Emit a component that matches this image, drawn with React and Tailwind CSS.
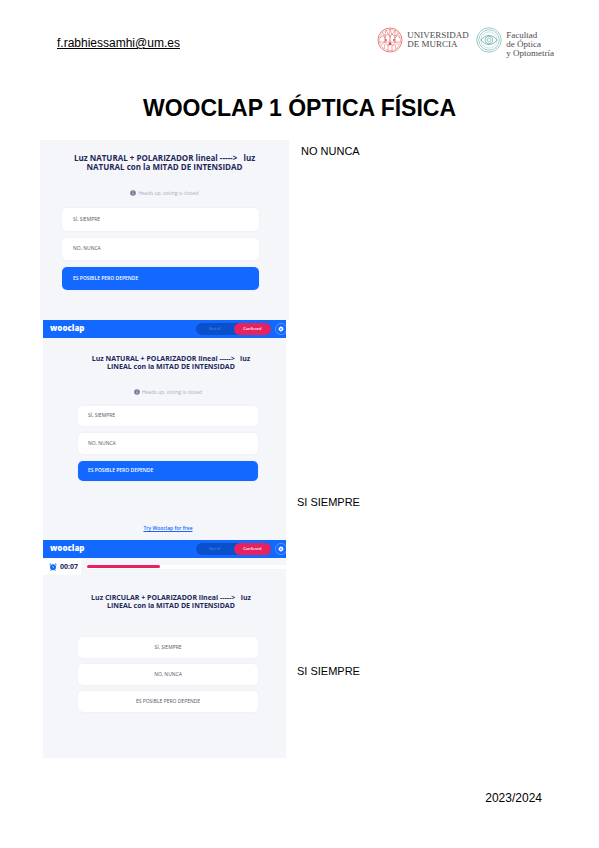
import React from 'react';

function UniversityCrest() {
  return (
    <svg viewBox="0 0 26 26" className="h-[26px] w-[26px] shrink-0" fill="none" stroke="#e0746e" aria-hidden="true">
      <circle cx="13" cy="13" r="12" strokeWidth=".9" />
      <circle cx="13" cy="13" r="10.6" strokeWidth=".4" />
      <path d="M3 11c2-3 4-3 5 0v4M8 11c1-4 4-5 5-1v6M13 10c1-4 4-3 5 1v4M18 11c1-3 3-3 5 0" strokeWidth=".9" />
      <path d="M5 5l3 4 1-6 3 5 1-6 2 6 3-5 0 6 4-3M2 15h22M4 18l4-3 3 4 2-4 3 4 2-4 4 3M7 22l1-5M11 24v-6M15 24v-6M19 22l-1-5" strokeWidth=".6" />
      <circle cx="13" cy="17" r="1.3" fill="#d9434f" stroke="none" />
      <circle cx="9" cy="13" r=".9" fill="#d9434f" stroke="none" />
      <circle cx="17" cy="13" r=".9" fill="#d9434f" stroke="none" />
    </svg>
  );
}

function OpticsLogo() {
  return (
    <svg viewBox="0 0 26 26" className="h-[26px] w-[26px] shrink-0" fill="none" stroke="#7dbbb7" aria-hidden="true">
      <circle cx="13" cy="13" r="12.2" strokeWidth=".8" />
      <circle cx="13" cy="13" r="10.2" strokeWidth=".7" />
      <circle cx="13" cy="13" r="8.2" strokeWidth=".4" />
      <path d="M5 13c4-6 12-6 16 0c-4 6-12 6-16 0z" strokeWidth="1" />
      <circle cx="13" cy="13" r="3.8" strokeWidth=".9" />
      <circle cx="13" cy="13" r="1.8" strokeWidth=".8" />
    </svg>
  );
}

function Gear() {
  return (
    <svg viewBox="0 0 14 14" className="h-3.5 w-3.5" aria-hidden="true">
      <circle cx="7" cy="7" r="5.6" fill="none" stroke="#6da3ff" strokeWidth=".7" />
      <circle cx="7" cy="7" r="1.5" fill="none" stroke="#fff" strokeWidth="1.3" />
      <circle cx="7" cy="7" r="2.3" fill="none" stroke="#fff" strokeWidth=".7" strokeDasharray="1 .8" />
    </svg>
  );
}

function AlarmClock() {
  return (
    <svg viewBox="0 0 8 8" className="h-2 w-2 shrink-0" aria-hidden="true">
      <circle cx="4" cy="4.3" r="3" fill="#1268ff" />
      <path d="M.5 1.8L2 .6M7.5 1.8L6 .6M1.6 7.6l.8-1M6.4 7.6l-.8-1" stroke="#1268ff" strokeWidth="1" />
      <path d="M4 2.8v1.6l1 .6" stroke="#fff" strokeWidth=".6" fill="none" />
    </svg>
  );
}

function TopBar() {
  return (
    <div className="flex h-[18px] items-center bg-[#1268ff] pl-[7px]">
      <span className="grow pb-0.5 text-[8px] leading-3 font-extrabold text-white">wooclap</span>
      <div className="flex h-3 w-[75px] rounded-full bg-[#0b50cb] text-[4px] leading-3">
        <button type="button" className="w-1/2 text-[#5f93ed]">Got it!</button>
        <button type="button" className="w-1/2 rounded-full bg-[#e62260] font-semibold text-white">Confused</button>
      </div>
      <button type="button" aria-label="Settings" className="ml-[3px] w-3 shrink-0 overflow-hidden">
        <Gear />
      </button>
    </div>
  );
}

function Question({ kind, second, look }) {
  return (
    <h2 className={`text-center font-bold whitespace-nowrap text-[#23285a] ${look}`}>
      Luz {kind} + POLARIZADOR lineal -----&gt; &nbsp; luz
      <br />
      {second} con la MITAD DE INTENSIDAD
    </h2>
  );
}

function Closed() {
  return (
    <p className="flex items-center justify-center gap-0.5 text-[5px] leading-[6px] text-[#a9acbf]">
      <svg viewBox="0 0 6 6" className="h-1.5 w-1.5" aria-hidden="true">
        <circle cx="3" cy="3" r="2.8" fill="#737895" />
        <path d="M3 1.2v.7M3 2.5v2.1" stroke="#fff" strokeWidth=".7" />
      </svg>
      Heads up, voting is closed
    </p>
  );
}

function Options({ size, align, chosen }) {
  const labels = ['SÍ, SIEMPRE', 'NO, NUNCA', 'ES POSIBLE PERO DEPENDE'];
  return (
    <div className={`flex flex-col ${size}`}>
      {labels.map((label, i) => (
        <button
          type="button"
          key={label}
          className={`grow rounded-[5px] text-[5px] shadow-[0_0_2px_#e4e6ee] ${align} ${
            chosen === i ? 'bg-[#1268ff] font-semibold text-white' : 'bg-white text-[#55585f]'
          }`}
        >
          {label}
        </button>
      ))}
    </div>
  );
}

function Answer({ children, place }) {
  return <p className={`text-[11px] leading-4 ${place}`}>{children}</p>;
}

export default function App() {
  return (
    <div className="bg-white font-['Liberation_Sans',Arial,sans-serif] text-black">
      <header className="flex items-start justify-between pt-[27px] pr-[45px] pl-[57px]">
        <a href="mailto:f.rabhiessamhi@um.es" className="mt-2 text-[12px] leading-4 underline">
          f.rabhiessamhi@um.es
        </a>
        <div className="flex items-start font-['Liberation_Serif',serif] text-[9px] leading-[9px] text-[#4b4b50]">
          <UniversityCrest />
          <p className="mt-1 ml-1 w-[69px]">
            UNIVERSIDAD
            <br />
            DE MURCIA
          </p>
          <OpticsLogo />
          <p className="mt-1 ml-1">
            Facultad
            <br />
            de Óptica
            <br />
            y Optometría
          </p>
        </div>
      </header>

      <h1 className="mt-[34px] text-center text-[23px] leading-8 font-bold">WOOCLAP 1 ÓPTICA FÍSICA</h1>

      <main className="mt-4 pl-10">
        <section className="flex">
          <div className="h-[180px] w-[249px] bg-[#f5f6fa] px-[22px] pt-[13px] font-['Open_Sans',sans-serif]">
            <Question kind="NATURAL" second="NATURAL" look="text-[8px] leading-[9px]" />
            <div className="mt-[19px]"><Closed /></div>
            <div className="mt-3">
              <Options size="h-[82px] w-[197px] gap-[7px]" align="px-[11px] text-left" chosen={2} />
            </div>
          </div>
          <Answer place="ml-3 mt-[3px]">NO NUNCA</Answer>
        </section>

        <section className="flex pl-[3px]">
          <div className="flex h-[220px] w-[243px] flex-col bg-[#f5f6fa] font-['Open_Sans',sans-serif]">
            <TopBar />
            <div className="mt-[17px] pl-[13px]"><Question kind="NATURAL" second="LINEAL" look="text-[7px] leading-[8px]" /></div>
            <div className="mt-[18px] pl-[7px]"><Closed /></div>
            <div className="mt-[11px] pl-[35px]">
              <Options size="h-[75px] w-[180px] gap-[7px]" align="px-[10px] text-left" chosen={2} />
            </div>
            <a href="#wooclap" className="mt-[44px] ml-[7px] self-center text-[5px] leading-[6px] font-semibold text-[#1268ff] underline">
              Try Wooclap for free
            </a>
          </div>
          <Answer place="ml-[11px] mt-[174px]">SI SIEMPRE</Answer>
        </section>

        <section className="flex pl-[3px]">
          <div className="h-[218px] w-[243px] bg-[#f5f6fa] font-['Open_Sans',sans-serif]">
            <TopBar />
            <div className="flex h-[18px] items-center">
              <div className="flex h-4 w-[38px] items-center gap-[3px] bg-white pl-1.5 text-[7px] font-bold text-[#23285a]">
                <AlarmClock />
                00:07
              </div>
              <div className="ml-1.5 h-1 grow bg-white">
                <div className="h-[3px] w-[73px] rounded-full bg-[#e62260]" />
              </div>
            </div>
            <div className="mt-[18px] pl-[13px]"><Question kind="CIRCULAR" second="LINEAL" look="text-[7px] leading-[8px]" /></div>
            <div className="mt-[27px] pl-[35px]">
              <Options size="h-[75px] w-[180px] gap-1.5" align="text-center" />
            </div>
          </div>
          <Answer place="ml-[11px] mt-[123px]">SI SIEMPRE</Answer>
        </section>
      </main>

      <footer className="pt-8 pr-[57px] pb-10 text-right text-[12px] leading-4">2023/2024</footer>
    </div>
  );
}
